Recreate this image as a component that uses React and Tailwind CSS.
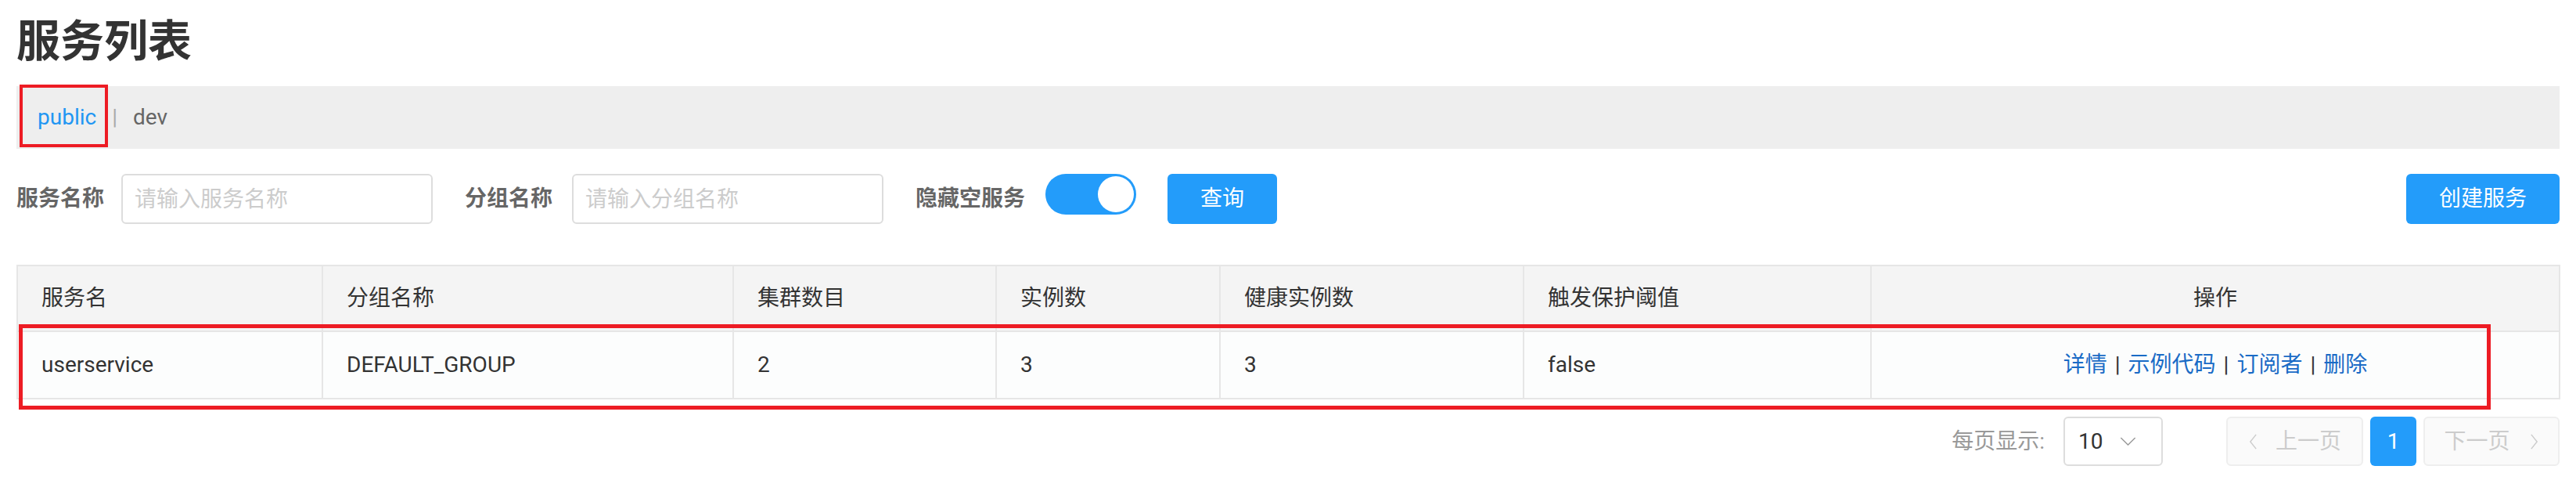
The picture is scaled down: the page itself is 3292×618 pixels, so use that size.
import React from "react";

const columns = [
  { key: "name", title: "服务名", width: 390 },
  { key: "group", title: "分组名称", width: 525 },
  { key: "clusters", title: "集群数目", width: 336 },
  { key: "ips", title: "实例数", width: 286 },
  { key: "healthy", title: "健康实例数", width: 388 },
  { key: "trigger", title: "触发保护阈值", width: 444 },
  { key: "ops", title: "操作", width: 880 }
];

const rows = [
  { name: "userservice", group: "DEFAULT_GROUP", clusters: "2", ips: "3", healthy: "3", trigger: "false" }
];

const Chevron = ({ dir = "left", className = "" }) => (
  <svg viewBox="0 0 12 24" className={className} fill="none" stroke="currentColor" strokeWidth="1.6">
    {dir === "left" ? <polyline points="10,2 2,12 10,22" /> : <polyline points="2,2 10,12 2,22" />}
  </svg>
);

const App = () => {
  return (
    <div
      className="relative min-h-[618px] w-[3292px] bg-white px-[21px] text-[#333]"
      style={{ fontFamily: 'Roboto, "Noto Sans CJK SC", sans-serif' }}
    >
      <h1 className="pt-[17px] text-[56px] font-bold leading-[72px] text-[#333]">服务列表</h1>

      <div className="mt-[21px] flex h-[80px] items-center bg-[#eeeeee] pl-[27px] text-[28px]">
        <span className="text-[#2196f3]">public</span>
        <span className="mx-[20px] text-[#aaa]">|</span>
        <span className="text-[#666]">dev</span>
      </div>

      <div className="mt-[32px] flex h-[64px] items-center">
        <span className="mr-[22px] text-[28px] font-bold text-[#666]">服务名称</span>
        <input
          className="h-[64px] w-[398px] rounded-[6px] border-2 border-[#dddddd] px-[15px] text-[28px] outline-none placeholder:text-[#cccccc]"
          placeholder="请输入服务名称"
        />
        <span className="ml-[41px] mr-[25px] text-[28px] font-bold text-[#666]">分组名称</span>
        <input
          className="h-[64px] w-[398px] rounded-[6px] border-2 border-[#dddddd] px-[15px] text-[28px] outline-none placeholder:text-[#cccccc]"
          placeholder="请输入分组名称"
        />
        <span className="ml-[41px] mr-[26px] text-[28px] font-bold text-[#666]">隐藏空服务</span>
        <div className="flex h-[52px] w-[116px] items-center justify-end self-start rounded-full bg-[#239cfa] pr-[3px]">
          <div className="h-[46px] w-[46px] rounded-full bg-white" />
        </div>
        <button className="ml-[40px] h-[64px] w-[140px] rounded-[6px] bg-[#239cfa] text-[28px] text-white">查询</button>
        <button className="ml-auto h-[64px] w-[196px] rounded-[6px] bg-[#239cfa] text-[28px] text-white">创建服务</button>
      </div>

      <table className="mt-[52px] w-[3249px] table-fixed border-collapse border-2 border-[#e6e6e6] text-[28px]">
        <colgroup>
          {columns.map((c) => (
            <col key={c.key} style={{ width: c.width }} />
          ))}
        </colgroup>
        <thead>
          <tr className="h-[84px] bg-[#f4f4f4]">
            {columns.map((c) => (
              <th
                key={c.key}
                className={`border-2 border-[#e6e6e6] font-normal text-[#333] ${c.key === "ops" ? "text-center" : "pl-[30px] text-left"}`}
              >
                {c.title}
              </th>
            ))}
          </tr>
        </thead>
        <tbody>
          {rows.map((r) => (
            <tr key={r.name} className="h-[86px] bg-[#fcfdfd]">
              <td className="border-2 border-[#e6e6e6] pl-[30px]">{r.name}</td>
              <td className="border-2 border-[#e6e6e6] pl-[30px]">{r.group}</td>
              <td className="border-2 border-[#e6e6e6] pl-[30px]">{r.clusters}</td>
              <td className="border-2 border-[#e6e6e6] pl-[30px]">{r.ips}</td>
              <td className="border-2 border-[#e6e6e6] pl-[30px]">{r.healthy}</td>
              <td className="border-2 border-[#e6e6e6] pl-[30px]">{r.trigger}</td>
              <td className="border-2 border-[#e6e6e6] text-center">
                <a className="text-[#1a6bc6]">详情</a>
                <span className="mx-[10px] text-[#333]">|</span>
                <a className="text-[#1a6bc6]">示例代码</a>
                <span className="mx-[10px] text-[#333]">|</span>
                <a className="text-[#1a6bc6]">订阅者</a>
                <span className="mx-[10px] text-[#333]">|</span>
                <a className="text-[#1a6bc6]">删除</a>
              </td>
            </tr>
          ))}
        </tbody>
      </table>

      <div className="mt-[22px] flex h-[63px] items-center justify-end text-[28px]">
        <span className="text-[#999]">每页显示:</span>
        <div className="ml-[24px] flex h-[63px] w-[127px] items-center rounded-[6px] border-2 border-[#dddddd] pl-[17px] text-[#333]">
          <span>10</span>
          <svg viewBox="0 0 22 12" className="ml-[22px] h-[11px] w-[21px] text-[#999]" fill="none" stroke="currentColor" strokeWidth="1.5">
            <polyline points="1,1 11,11 21,1" />
          </svg>
        </div>
        <button className="ml-[81px] flex h-[63px] w-[175px] items-center justify-center rounded-[6px] border-2 border-[#eeeeee] bg-[#fafafa] text-[#cccccc]">
          <Chevron dir="left" className="h-[22px] w-[13px]" />
          <span className="ml-[22px]">上一页</span>
        </button>
        <button className="ml-[9px] h-[63px] w-[59px] rounded-[6px] bg-[#239cfa] text-white">1</button>
        <button className="ml-[9px] flex h-[63px] w-[174px] items-center justify-center rounded-[6px] border-2 border-[#eeeeee] bg-[#fafafa] text-[#cccccc]">
          <span className="mr-[24px]">下一页</span>
          <Chevron dir="right" className="h-[22px] w-[13px]" />
        </button>
      </div>

      <div className="pointer-events-none absolute left-[25px] top-[108px] h-[80px] w-[113px] border-4 border-[#ed1c24]" />
      <div className="pointer-events-none absolute left-[24px] top-[414px] h-[109px] w-[3159px] border-[5px] border-[#ed1c24]" />
    </div>
  );
};

export default App;
